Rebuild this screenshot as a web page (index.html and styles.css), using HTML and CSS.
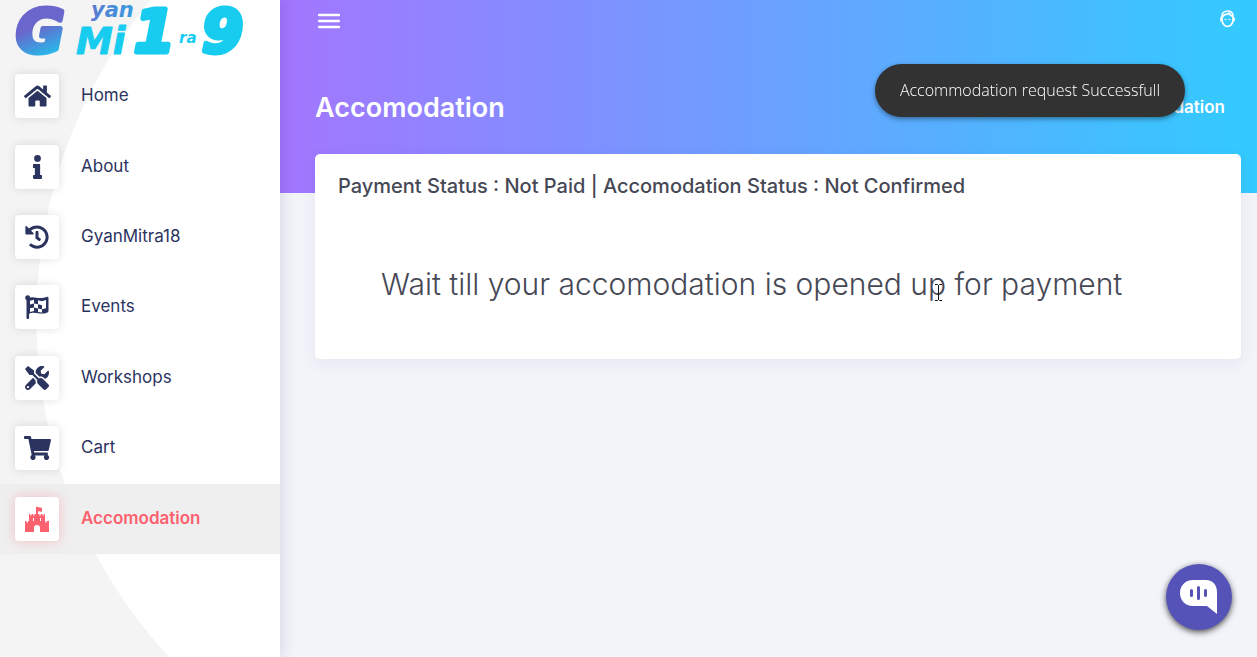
FILE: index.html
```html
<!DOCTYPE html>
<html lang="en">
<head>
<meta charset="utf-8">
<title>Accomodation</title>
<link rel="stylesheet" href="styles.css">
</head>
<body>
<div class="app">
  <aside class="sidebar">
    <a class="brand" href="#" aria-label="GyanMitra19">
      <svg width="256" height="70" viewBox="0 0 256 70">
        <defs>
          <linearGradient id="brand-fill" gradientUnits="userSpaceOnUse" x1="40" y1="8" x2="60" y2="58">
            <stop offset="0.3" stop-color="#6a66cc"/><stop offset="1" stop-color="#17ccef"/>
          </linearGradient>
          <linearGradient id="brand-small" gradientUnits="userSpaceOnUse" x1="88" y1="0" x2="150" y2="0">
            <stop offset="0" stop-color="#5b78d2"/><stop offset="1" stop-color="#2ba9e4"/>
          </linearGradient>
        </defs>
        <g class="brand-text">
          <text x="16" y="52" font-size="59" fill="url(#brand-fill)" stroke="url(#brand-fill)" stroke-width="5">G</text>
          <text x="76" y="54" font-size="37" fill="#17ccef" stroke="#17ccef" stroke-width="1">Mi</text>
          <text x="91" y="17" font-size="21" fill="url(#brand-small)">yan</text>
          <text x="134" y="52" font-size="59" fill="#17ccef" stroke="#17ccef" stroke-width="5">1</text>
          <text x="202" y="52" font-size="59" fill="#17ccef" stroke="#17ccef" stroke-width="5">9</text>
          <text x="179" y="43" font-size="15" fill="#17ccef">ra</text>
        </g>
      </svg>
    </a>
    <nav class="menu">
      <a class="item" href="#"><span class="tile"><svg width="27" height="24" viewBox="0 0 576 512"><path d="M280.4 148.300L96 300.100V464a16 16 0 0 0 16 16l112.100-.3a16 16 0 0 0 15.900-16V368a16 16 0 0 1 16-16h64a16 16 0 0 1 16 16v95.600a16 16 0 0 0 16 16.100L464 480a16 16 0 0 0 16-16V300L295.700 148.300a12.200 12.200 0 0 0-15.300 0zM571.600 251.500L488 182.600V44.100a12 12 0 0 0-12-12h-56a12 12 0 0 0-12 12v72.600L318.500 43a48 48 0 0 0-61 0L4.300 251.500a12 12 0 0 0-1.600 16.900l25.500 31A12 12 0 0 0 45.200 301l235.200-193.700a12.200 12.200 0 0 1 15.300 0L530.900 301a12 12 0 0 0 16.900-1.600l25.500-31a12 12 0 0 0-1.700-16.900z"/></svg></span><span class="label">Home</span></a>
      <a class="item" href="#"><span class="tile"><svg width="9" height="24" viewBox="0 0 192 512"><path d="M20 424.200h20V279.800H20c-11 0-20-9-20-20V212c0-11 9-20 20-20h112c11 0 20 9 20 20v212.200h20c11 0 20 9 20 20V492c0 11-9 20-20 20H20c-11 0-20-9-20-20v-47.800c0-11 9-20 20-20zM96 0a72 72 0 1 0 0 144A72 72 0 0 0 96 0z"/></svg></span><span class="label">About</span></a>
      <a class="item" href="#"><span class="tile"><svg width="24" height="24" viewBox="0 0 512 512"><path d="M504 255.500c.3 136.600-111.200 248.400-247.800 248.500-59 0-113.200-20.500-155.800-54.900-11.100-8.900-11.900-25.500-1.800-35.600l11.300-11.300c8.600-8.600 22.400-9.600 31.900-2C173.100 425.100 212.800 440 256 440c101.700 0 184-82.300 184-184 0-101.700-82.300-184-184-184-48.800 0-93.100 19-126.100 49.900l50.800 50.800c10.100 10.100 2.900 27.300-11.300 27.300H24c-8.800 0-16-7.200-16-16V38.600c0-14.300 17.200-21.400 27.300-11.300l49.400 49.400C129.200 34.100 189.600 8 256 8c136.800 0 247.700 110.800 248 247.500zM323.100 334.500l9.800-12.600c8.100-10.500 6.300-25.500-4.200-33.700L288 256.300V152c0-13.300-10.700-24-24-24h-16c-13.300 0-24 10.700-24 24v135.700l65.400 50.900c10.500 8.100 25.500 6.300 33.700-4.100z"/></svg></span><span class="label">GyanMitra18</span></a>
      <a class="item" href="#"><span class="tile"><svg width="24" height="24" viewBox="0 0 24 24"><circle cx="2.700" cy="2.700" r="2.500"/><path d="M1.500 3h2.600v20a1 1 0 0 1-1 1h-.6a1 1 0 0 1-1-1z"/><path fill-rule="evenodd" d="M4 3.500C8-.2 13 5.300 21.500 2c1.100-.5 2 .1 2 1.200v12.600c0 .8-.3 1.300-1 1.600-7.300 3.500-12-2-18.500 1.400zM5 5.800v3.600l4-1V4.700zM13 5.300v4l4 1V6.200zM21 5l-4 1.200v4.100l4-1zM9 8.400v4l4 1V9.300zM5 13.200V17l4-1v-3.600zM13 13.400v3.500l4 .7v-3.400zM17 10.300v3.900l4-1V9.300z"/></svg></span><span class="label">Events</span></a>
      <a class="item" href="#"><span class="tile"><svg width="24" height="24" viewBox="0 0 512 512"><path d="M501.100 395.700L384 278.600c-23.100-23.100-57.600-27.600-85.400-13.900L192 158.100V96L64 0 0 64l96 128h62.100l106.600 106.600c-13.600 27.800-9.200 62.300 13.900 85.400l117.100 117.100c14.600 14.600 38.200 14.600 52.700 0l52.700-52.700c14.500-14.600 14.500-38.200 0-52.700zM331.700 225c28.300 0 54.900 11 74.900 31l19.400 19.400c15.800-6.900 30.800-16.500 43.800-29.500 37.100-37.100 49.700-89.300 37.900-136.700-2.200-9-13.500-12.100-20.100-5.500l-74.400 74.400-67.900-11.300L334 98.900l74.400-74.400c6.600-6.600 3.400-17.900-5.700-20.200-47.400-11.700-99.600.9-136.600 37.900-28.500 28.500-41.900 66.100-41.200 103.600l82.100 82.100c8.100-1.900 16.500-2.900 24.700-2.900zm-103.900 82l-56.700-56.700L18.700 402.800c-25 25-25 65.500 0 90.500s65.500 25 90.500 0l123.600-123.600c-7.600-19.900-9.900-41.600-5-62.700zM64 472a24 24 0 1 1 0-48 24 24 0 0 1 0 48z"/></svg></span><span class="label">Workshops</span></a>
      <a class="item" href="#"><span class="tile"><svg width="27" height="24" viewBox="0 0 576 512"><path d="M528.100 301.300l47.300-208C578.800 78.300 567.400 64 552 64H159.200l-9.200-44.800C147.800 8 137.900 0 126.500 0H24C10.700 0 0 10.700 0 24v16c0 13.300 10.700 24 24 24h69.900l70.200 343.400C147.300 417.100 136 435.200 136 456c0 30.900 25.100 56 56 56s56-25.100 56-56c0-15.700-6.400-29.800-16.800-40h209.600C430.400 426.200 424 440.300 424 456c0 30.900 25.100 56 56 56s56-25.100 56-56c0-22.200-12.900-41.300-31.600-50.400l5.500-24.300c3.400-15-8-29.300-23.400-29.300H218.100l-6.500-32h293.100c11.200 0 20.900-7.800 23.400-18.700z"/></svg></span><span class="label">Cart</span></a>
      <a class="item active" href="#" aria-current="page"><span class="tile"><svg width="24" height="26" viewBox="0 0 24 26"><path fill-rule="evenodd" d="M11 1.500a1 1 0 0 1 2 0c1.500-.6 2.500.6 4 0v4c-1.500.6-2.500-.6-4 0V8h1.500v1.500h1.200V8h1.800v1.500h1.200V8h1.300v7H20.300v1.500h1.300V15H24v11h-9v-4a3 3 0 0 0-6 0v4H0V15h1.500v1.500H3V15h1V8h1.300v1.500h1.200V8h1.800v1.500h1.200V8H11zM8 12v3h1v-3zm7 0v3h1v-3z"/></svg></span><span class="label">Accomodation</span></a>
    </nav>
  </aside>

  <main class="main">
    <header class="topbar">
      <button class="icon-button" type="button" aria-label="Toggle menu"><svg width="22" height="16" viewBox="0 0 22 16"><path d="M1 2h20M1 8h20M1 14h20" fill="none" stroke="#fff" stroke-width="2.400" stroke-linecap="round"/></svg></button>
      <button class="icon-button profile" type="button" aria-label="Profile"><svg width="15" height="18" viewBox="0 0 15 18"><g fill="none" stroke="#fff" stroke-width="1.700" stroke-linecap="round"><path d="M2 7C1.500 3 4 1 8 1c3.500 0 5.500 2.500 5 6v2.500C13 13.500 10.500 16.500 7.500 16.500S2 13.500 2 9.500z"/><path d="M3 6.500C3.500 4 7 5 9.500 3M10 4.500c.5 1 1.500 1.500 2.700 1.500M1 8v2.500M14 8v2.500"/><path d="M5 9.500h1M9 9.500h1" stroke-width="1"/></g></svg></button>
    </header>
    <div class="heading">
      <h1 class="title">Accomodation</h1>
      <span class="crumb">Accomodation</span>
    </div>
    <section class="card">
      <h2 class="status">Payment Status : Not Paid | Accomodation Status : Not Confirmed</h2>
      <p class="message">Wait till your accomodation is opened up for payment</p>
      <svg class="pointer" width="7" height="17" viewBox="0 0 7 17"><path d="M0 .5h2.500l1 1 1-1H7M3.500 1v15M0 16.500h2.500l1-1 1 1H7" fill="none" stroke="#111"/></svg>
    </section>
  </main>
</div>
<div class="toast" role="status">Accommodation request Successfull</div>
<button class="chat" type="button" aria-label="Open chat"><svg width="38" height="34" viewBox="0 0 38 34"><path fill="#fff" d="M13 0h13c7 0 11 5 11 12v22l-10-8H13C5 26 0 20 0 13S5 0 13 0z"/><path d="M11.500 10.500v5M18.500 7.500v11M25.500 10.500v5" stroke="#5653b8" stroke-width="3" stroke-linecap="round"/></svg></button>
</body>
</html>
```
FILE: styles.css
```css
* { box-sizing: border-box; }
body {
  margin: 0;
  background: #f3f4fa;
  color: #464855;
  font-family: Inter, "Open Sans", sans-serif;
}
.app { display: flex; min-height: 100vh; }

.sidebar {
  flex: 0 0 280px;
  z-index: 1;
  background: radial-gradient(circle at 536px 318px, #fff 499px, #f4f4f4 500px);
  box-shadow: 1px 0 14px rgba(40, 40, 80, 0.16);
}
.brand { display: block; height: 61px; }
.brand svg { display: block; }
.brand-text {
  font-family: "DejaVu Sans", sans-serif;
  font-weight: bold;
  font-style: italic;
  stroke-linejoin: round;
}
.menu {
  display: grid;
  grid-auto-rows: 1fr;
  min-height: 493px;
}
.item {
  display: flex;
  align-items: center;
  gap: 22px;
  padding: 0 15px;
  color: #2b335f;
  font-size: 17px;
  font-weight: 400;
  text-decoration: none;
}
.tile {
  display: flex;
  align-items: center;
  justify-content: center;
  width: 44px;
  height: 44px;
  border-radius: 4px;
  background: #fff;
  box-shadow: 0 0 10px rgba(0, 0, 0, 0.12);
}
.tile svg { fill: currentColor; }
.label { padding-bottom: 2px; }
.active { background: #efefef; color: #fc6170; font-weight: 600; }
.active .tile { box-shadow: 0 0 12px rgba(252, 97, 112, 0.35); }

.main {
  flex: 1;
  min-width: 0;
  padding: 0 16px 0 35px;
  background: linear-gradient(90deg, #a376ff, #32cbff) no-repeat 0 0 / 100% 193px;
}
.topbar {
  display: flex;
  align-items: center;
  justify-content: space-between;
  height: 42px;
  padding: 0 6px 0 3px;
}
.icon-button { display: flex; padding: 0; border: 0; background: none; cursor: pointer; }
.profile { padding-bottom: 4px; }
.heading {
  display: flex;
  align-items: center;
  justify-content: space-between;
  height: 112px;
  padding: 18px 16px 0 0;
  color: #fff;
}
.title { margin: 0; font-size: 27px; font-weight: 600; }
.crumb { font-size: 17px; font-weight: 600; }
.card {
  position: relative;
  min-height: 205px;
  padding: 20px 23px;
  border-radius: 5px;
  background: #fff;
  box-shadow: 0 4px 16px rgba(60, 60, 110, 0.08);
}
.status { margin: 0; font-size: 20px; font-weight: 500; line-height: 24px; }
.message { margin: 0; padding: 66px 43px 0; font-size: 30px; font-weight: 300; line-height: 40px; }
.pointer { position: absolute; left: 620px; top: 130px; }

.toast {
  position: fixed;
  top: 64px;
  right: 72px;
  z-index: 2;
  padding: 14px 25px;
  border-radius: 27px;
  background: #323232;
  color: #fff;
  font: 300 16px/25px "Open Sans", sans-serif;
  box-shadow: 0 2px 5px rgba(0, 0, 0, 0.4);
}
.chat {
  position: fixed;
  right: 25px;
  bottom: 27px;
  display: flex;
  align-items: center;
  justify-content: center;
  width: 66px;
  height: 66px;
  padding: 0;
  border: 0;
  border-radius: 50%;
  background: #5653b8;
  box-shadow: 0 2px 6px rgba(0, 0, 0, 0.7);
}
```
